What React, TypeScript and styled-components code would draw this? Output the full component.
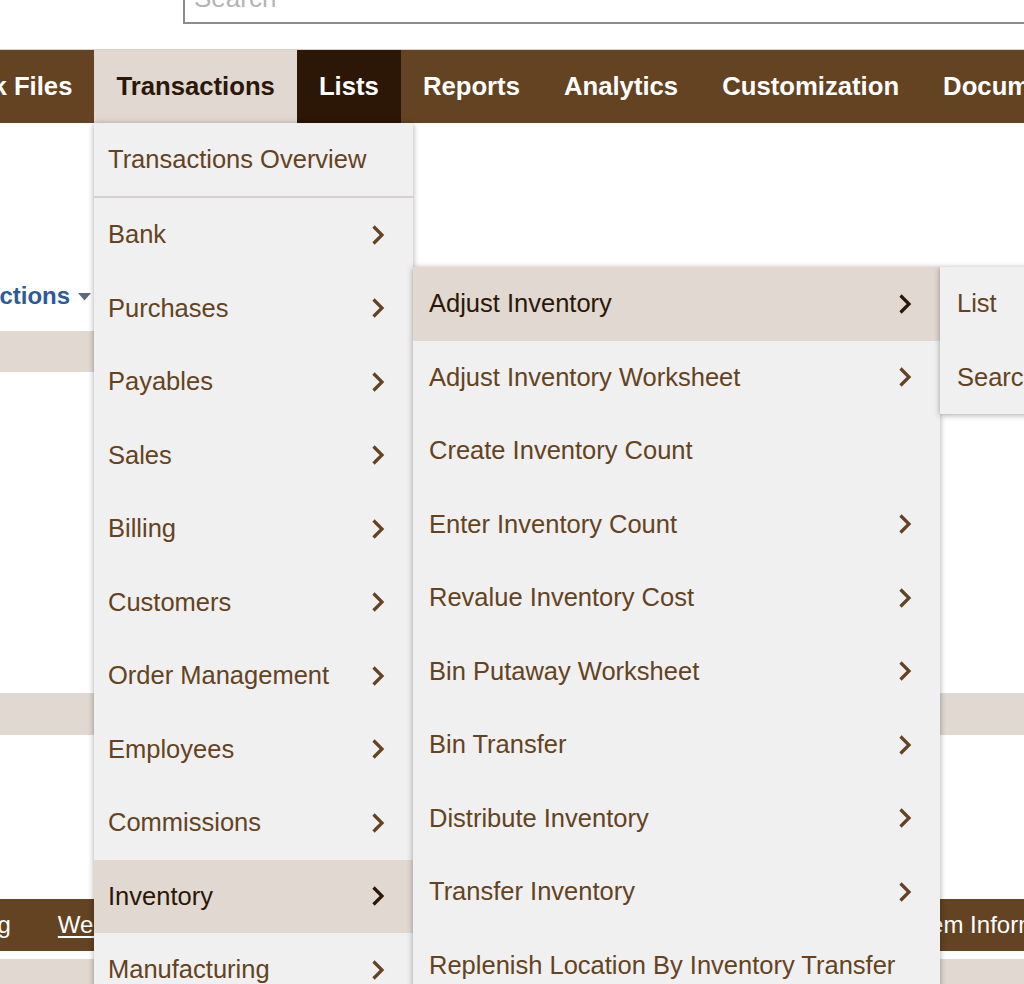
import styled, { createGlobalStyle } from 'styled-components';

const GlobalStyle = createGlobalStyle`
    html, body {
        margin: 0;
        padding: 0;
        background: #ffffff;
        overflow: hidden;
    }
    body {
        font-family: "Liberation Sans", Arial, Helvetica, sans-serif;
    }
`;

const mainItems = [
    { label: 'Bank', sub: true },
    { label: 'Purchases', sub: true },
    { label: 'Payables', sub: true },
    { label: 'Sales', sub: true },
    { label: 'Billing', sub: true },
    { label: 'Customers', sub: true },
    { label: 'Order Management', sub: true },
    { label: 'Employees', sub: true },
    { label: 'Commissions', sub: true },
    { label: 'Inventory', sub: true, active: true },
    { label: 'Manufacturing', sub: true },
];

const inventoryItems = [
    { label: 'Adjust Inventory', sub: true, active: true },
    { label: 'Adjust Inventory Worksheet', sub: true },
    { label: 'Create Inventory Count', sub: false },
    { label: 'Enter Inventory Count', sub: true },
    { label: 'Revalue Inventory Cost', sub: true },
    { label: 'Bin Putaway Worksheet', sub: true },
    { label: 'Bin Transfer', sub: true },
    { label: 'Distribute Inventory', sub: true },
    { label: 'Transfer Inventory', sub: true },
    { label: 'Replenish Location By Inventory Transfer', sub: false },
];

const navItems = ['Work Files', 'Transactions', 'Lists', 'Reports', 'Analytics', 'Customization', 'Documents', 'Setup'];

const Chevron = ({ dark }: { dark?: boolean }) => (
    <ChevronSvg width="14" height="22" viewBox="0 0 14 22">
        <polyline
            points="2.5,2.5 11,11 2.5,19.5"
            fill="none"
            stroke={dark ? '#2b1708' : '#634321'}
            strokeWidth="3.2"
            strokeLinejoin="miter"
        />
    </ChevronSvg>
);

const App = () => {
    return (
        <Page>
            <GlobalStyle />
            <SearchRow>
                <SearchBox>Search</SearchBox>
            </SearchRow>
            <NavBar>
                <NavTrack>
                    {navItems.map(item => (
                        <NavItem
                            key={item}
                            $variant={item === 'Transactions' ? 'open' : item === 'Lists' ? 'hover' : 'plain'}
                        >
                            {item}
                        </NavItem>
                    ))}
                </NavTrack>
            </NavBar>
            <Content>
                <TitleRow>
                    <TitleLink>Transactions</TitleLink>
                    <Caret width="13" height="8" viewBox="0 0 13 8">
                        <polygon points="0,0 13,0 6.5,7.5" fill="#5a6880" />
                    </Caret>
                </TitleRow>
                <Strip $top={15} $height={41} />
                <Strip $top={321} $height={42} />
                <FooterBar>
                    <FooterLink $shift={-75}>Training</FooterLink>
                    <FooterLink $shift={47} $underline>
                        Web Services
                    </FooterLink>
                    <FooterLink $shift={678}>System Information</FooterLink>
                </FooterBar>
                <Strip $top={8} $height={40} />
            </Content>

            <Menu $left={94} $top={123} $width={319}>
                <OverviewItem>Transactions Overview</OverviewItem>
                {mainItems.map(item => (
                    <MenuItem key={item.label} $active={item.active}>
                        <span>{item.label}</span>
                        {item.sub && <Chevron dark={item.active} />}
                    </MenuItem>
                ))}
            </Menu>

            <Menu $left={413} $top={267} $width={527} $pad={16}>
                {inventoryItems.map(item => (
                    <MenuItem key={item.label} $active={item.active}>
                        <span>{item.label}</span>
                        {item.sub && <Chevron dark={item.active} />}
                    </MenuItem>
                ))}
            </Menu>

            <Menu $left={940} $top={267} $width={140} $pad={17}>
                <MenuItem>
                    <span>List</span>
                </MenuItem>
                <MenuItem>
                    <span>Search</span>
                </MenuItem>
            </Menu>
        </Page>
    );
};

export default App;

const Page = styled.div`
    position: relative;
    width: 1024px;
    height: 984px;
    overflow: hidden;
    background: #ffffff;
    font-family: "Liberation Sans", Arial, Helvetica, sans-serif;
`;

const SearchRow = styled.div`
    height: 49px;
    padding-left: 183px;
    overflow: hidden;
`;

const SearchBox = styled.div`
    box-sizing: border-box;
    width: 1000px;
    height: 60px;
    margin-top: -36px;
    border: 2px solid #8c8c8c;
    padding: 17px 0 0 9px;
    font-size: 26px;
    line-height: 30px;
    color: #b4b4b4;
`;

const NavBar = styled.nav`
    height: 73px;
    border-top: 1px solid #d9d1c9;
    background: #634321;
    overflow: hidden;
`;

const NavTrack = styled.div`
    display: flex;
    margin-left: -79px;
    white-space: nowrap;
`;

interface NavItemProps {
    $variant: 'open' | 'hover' | 'plain';
}

const NavItem = styled.div<NavItemProps>`
    flex: none;
    padding: 0 22px;
    height: 73px;
    line-height: 73px;
    font-size: 25.7px;
    font-weight: 700;
    background: ${props => {
        if (props.$variant === 'open') return '#e0d8d1';
        if (props.$variant === 'hover') return '#2c1606';
        return 'transparent';
    }};
    color: ${props => (props.$variant === 'open' ? '#2b1708' : '#ffffff')};
`;

const Content = styled.main`
    padding-top: 153px;
`;

const TitleRow = styled.div`
    display: flex;
    align-items: center;
    height: 40px;
    margin-left: -78px;
`;

const TitleLink = styled.span`
    font-size: 24px;
    font-weight: 700;
    color: #2d5a9a;
`;

const Caret = styled.svg`
    margin-left: 8px;
    margin-top: 2px;
`;

interface StripProps {
    $top: number;
    $height: number;
}

const Strip = styled.div<StripProps>`
    margin-top: ${props => props.$top}px;
    height: ${props => props.$height}px;
    background: #e0d8d1;
`;

const FooterBar = styled.footer`
    display: flex;
    align-items: center;
    margin-top: 164px;
    height: 52px;
    background: #634321;
    white-space: nowrap;
    overflow: hidden;
`;

interface FooterLinkProps {
    $shift: number;
    $underline?: boolean;
}

const FooterLink = styled.span<FooterLinkProps>`
    flex: none;
    margin-left: ${props => props.$shift}px;
    font-size: 24px;
    color: #ffffff;
    text-decoration: ${props => (props.$underline ? 'underline' : 'none')};
    text-underline-offset: 3px;
`;

interface MenuProps {
    $left: number;
    $top: number;
    $width: number;
    $pad?: number;
}

const Menu = styled.div<MenuProps>`
    position: absolute;
    left: ${props => props.$left}px;
    top: ${props => props.$top}px;
    width: ${props => props.$width}px;
    background: #f0f0f0;
    box-shadow: 0 1px 6px rgba(0, 0, 0, 0.35);
    z-index: 10;

    & > div {
        padding-left: ${props => props.$pad ?? 14}px;
    }
`;

const OverviewItem = styled.div`
    height: 73px;
    line-height: 73px;
    font-size: 25.5px;
    color: #634321;
    border-bottom: 2px solid #d7d0d0;
    box-sizing: content-box;
    white-space: nowrap;
`;

interface MenuItemProps {
    $active?: boolean;
}

const MenuItem = styled.div<MenuItemProps>`
    display: flex;
    align-items: center;
    justify-content: space-between;
    height: 73.5px;
    padding-right: 28px;
    font-size: 25.5px;
    white-space: nowrap;
    background: ${props => (props.$active ? '#e0d8d1' : 'transparent')};
    color: ${props => (props.$active ? '#2b1708' : '#634321')};
`;

const ChevronSvg = styled.svg`
    flex: none;
    margin-left: 12px;
`;
